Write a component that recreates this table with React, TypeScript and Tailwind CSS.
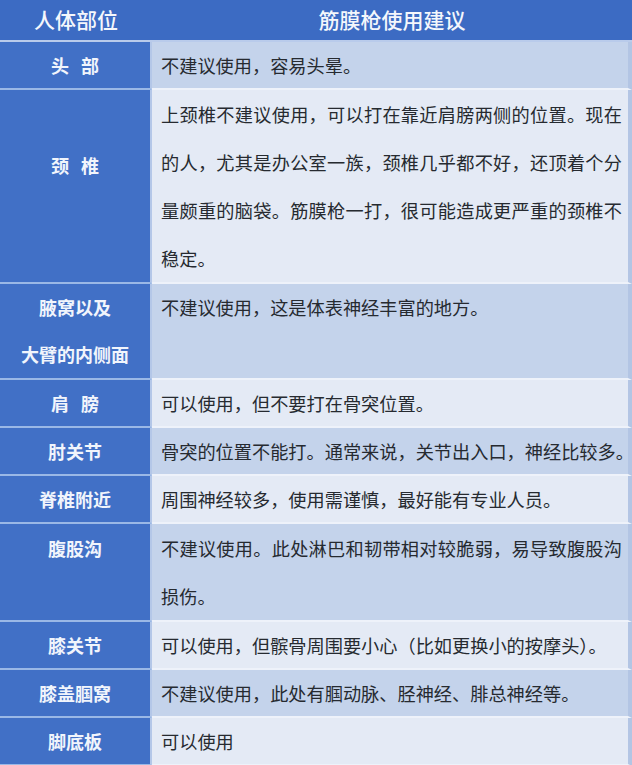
import React from "react"

type Row = {
  part: string[]
  spaced?: boolean
  lines: string[]
  tone: "mid" | "light"
  lead: string
  labelPad?: string
}

const rows: Row[] = [
  { part: ["头部"], spaced: true, lines: ["不建议使用，容易头晕。"], tone: "mid", lead: "leading-[46px]" },
  {
    part: ["颈椎"],
    spaced: true,
    lines: [
      "上颈椎不建议使用，可以打在靠近肩膀两侧的位置。现在",
      "的人，尤其是办公室一族，颈椎几乎都不好，还顶着个分",
      "量颇重的脑袋。筋膜枪一打，很可能造成更严重的颈椎不",
      "稳定。",
    ],
    tone: "light",
    lead: "leading-[48px]",
    labelPad: "pt-[51px]",
  },
  { part: ["腋窝以及", "大臂的内侧面"], lines: ["不建议使用，这是体表神经丰富的地方。"], tone: "mid", lead: "leading-[47px]" },
  { part: ["肩膀"], spaced: true, lines: ["可以使用，但不要打在骨突位置。"], tone: "light", lead: "leading-[46px]" },
  { part: ["肘关节"], lines: ["骨突的位置不能打。通常来说，关节出入口，神经比较多。"], tone: "mid", lead: "leading-[46px]" },
  { part: ["脊椎附近"], lines: ["周围神经较多，使用需谨慎，最好能有专业人员。"], tone: "light", lead: "leading-[46px]" },
  {
    part: ["腹股沟"],
    lines: ["不建议使用。此处淋巴和韧带相对较脆弱，易导致腹股沟", "损伤。"],
    tone: "mid",
    lead: "leading-[48px]",
  },
  { part: ["膝关节"], lines: ["可以使用，但髌骨周围要小心（比如更换小的按摩头）。"], tone: "light", lead: "leading-[46px]" },
  { part: ["膝盖腘窝"], lines: ["不建议使用，此处有腘动脉、胫神经、腓总神经等。"], tone: "mid", lead: "leading-[46px]" },
  { part: ["脚底板"], lines: ["可以使用"], tone: "light", lead: "leading-[46px]" },
]

const font = { fontFamily: '"Noto Sans CJK SC", "Noto Sans", sans-serif' }

export default function App() {
  return (
    <div className="w-[632px] h-[765px] overflow-hidden bg-[#e3e9f5]" style={font}>
      <div className="grid grid-cols-[152px_1fr] h-[42px] bg-[#3c6bc3] text-[21px] font-medium text-[#f4f7fc] border-b-2 border-[#b9cbeb]">
        <div className="flex items-center justify-center">人体部位</div>
        <div className="flex items-center justify-center">筋膜枪使用建议</div>
      </div>
      {rows.map((r, i) => (
        <div key={i} className="grid grid-cols-[152px_1fr]">
          <div
            className={`bg-[#4170c6] border-b-2 border-[#9ab8e6] border-r-2 border-r-[#b4c7e8] text-[18px] font-bold text-[#f1f5fc] ${r.lead} ${r.labelPad ?? ""} text-center`}
          >
            {r.part.map((p) =>
              r.spaced ? (
                <div key={p} className="flex justify-center gap-[12px]">
                  {p.split("").map((c) => (
                    <span key={c}>{c}</span>
                  ))}
                </div>
              ) : (
                <div key={p}>{p}</div>
              )
            )}
          </div>
          <div
            className={`${r.tone === "mid" ? "bg-[#c4d3eb]" : "bg-[#e4eaf5]"} min-w-0 border-b-2 border-[#eef2fa] border-r-4 border-r-[#b3c5e4] pl-[9px] text-[18.2px] text-[#262a30] ${r.lead}`}
          >
            {r.lines.map((l, j) => (
              <div
                key={j}
                className={
                  j < r.lines.length - 1
                    ? "mr-[6px] text-justify [text-align-last:justify]"
                    : "whitespace-nowrap"
                }
              >
                {l}
              </div>
            ))}
          </div>
        </div>
      ))}
    </div>
  )
}
